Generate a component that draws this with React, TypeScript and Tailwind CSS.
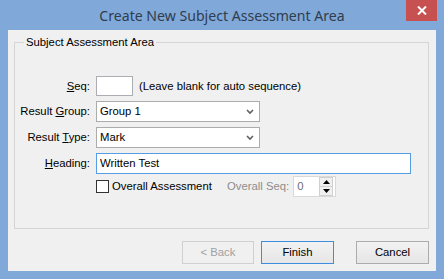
import type { ReactElement, ReactNode } from "react";

const UI_FONT = { fontFamily: '"Liberation Sans", Arial, sans-serif' };
const TITLE_FONT = { fontFamily: '"Noto Sans", "Open Sans", sans-serif' };

function Chevron(): ReactElement {
  return (
    <svg width="8" height="6" viewBox="0 0 8 6" className="shrink-0">
      <path d="M1 1 L4 4 L7 1" fill="none" stroke="#606060" strokeWidth="1.6" />
    </svg>
  );
}

function Label({ children }: { children: ReactNode }): ReactElement {
  return <div className="w-[81px] shrink-0 whitespace-nowrap pr-[6px] text-right text-black">{children}</div>;
}

function Combo({ value }: { value: string }): ReactElement {
  return (
    <div className="flex h-[21px] w-[164px] items-center justify-between border border-[#acacac] bg-white pl-[3px] pr-[5px]">
      <span>{value}</span>
      <Chevron />
    </div>
  );
}

export default function App(): ReactElement {
  return (
    <div className="flex h-[279px] w-[444px] flex-col bg-[#80a8d8] text-[11.3px] text-black" style={UI_FONT}>
      {/* Title bar */}
      <div className="relative flex h-[30px] shrink-0 items-center justify-center">
        <span className="pt-[1px] text-[14.1px] text-[#2f3d4f]" style={TITLE_FONT}>
          Create New Subject Assessment Area
        </span>
        <button className="absolute right-[7px] top-0 flex h-[21px] w-[31px] items-center justify-center bg-[#c75050]">
          <svg width="10" height="9" viewBox="0 0 10 9">
            <path d="M1 0.5 L9 8.5 M9 0.5 L1 8.5" stroke="white" strokeWidth="2" />
          </svg>
        </button>
      </div>

      {/* Client area */}
      <div className="mx-[8px] flex h-[241px] flex-col bg-[#f0f0f0]">
        {/* Group box */}
        <div className="relative ml-[6px] mt-[12px] h-[187px] w-[415px] border border-[#d5d5d5] pt-[33px]">
          <span className="absolute left-[9px] top-[-8px] bg-[#f0f0f0] px-[2px] leading-[14px]">
            Subject Assessment Area
          </span>

          <div className="flex flex-col">
            {/* Seq */}
            <div className="flex h-[20px] items-center">
              <Label>
                <u>S</u>eq:
              </Label>
              <div className="h-[20px] w-[37px] border border-[#abadb3] bg-white" />
              <span className="ml-[6px]">(Leave blank for auto sequence)</span>
            </div>

            {/* Result Group */}
            <div className="mt-[5px] flex items-center">
              <Label>
                Result <u>G</u>roup:
              </Label>
              <Combo value="Group 1" />
            </div>

            {/* Result Type */}
            <div className="mt-[5px] flex items-center">
              <Label>
                Result <u>T</u>ype:
              </Label>
              <Combo value="Mark" />
            </div>

            {/* Heading */}
            <div className="mt-[5px] flex items-center">
              <Label>
                <u>H</u>eading:
              </Label>
              <div className="flex h-[21px] w-[315px] items-center border border-[#569de5] bg-white pl-[3px]">
                Written Test
              </div>
            </div>

            {/* Overall */}
            <div className="mt-[2px] flex h-[21px] items-center">
              <div className="w-[81px] shrink-0" />
              <div className="h-[13px] w-[13px] border border-[#333333] bg-white" />
              <span className="ml-[3px] w-[115px] whitespace-nowrap">Overall Assessment</span>
              <span className="whitespace-nowrap text-[#8d8d8d]">Overall Seq:</span>
              <div className="ml-[4px] flex h-[21px] w-[43px] items-center border border-[#d9d9d9] bg-white">
                <span className="flex-1 pl-[3px] text-[#6d6d6d]">0</span>
                <div className="mr-[2px] flex h-[19px] w-[14px] flex-col border border-[#d0d0d0]">
                  <div className="flex flex-1 items-center justify-center border-b border-[#d0d0d0] bg-[#f0f0f0]">
                    <svg width="7" height="4" viewBox="0 0 7 4">
                      <path d="M0 4 L3.5 0 L7 4 Z" fill="#000" />
                    </svg>
                  </div>
                  <div className="flex flex-1 items-center justify-center bg-[#f0f0f0]">
                    <svg width="7" height="4" viewBox="0 0 7 4">
                      <path d="M0 0 L3.5 4 L7 0 Z" fill="#000" />
                    </svg>
                  </div>
                </div>
              </div>
            </div>
          </div>
        </div>

        {/* Buttons */}
        <div className="mt-[12px] flex h-[23px] pl-[174px]">
          <button className="h-[23px] w-[72px] border border-[#d0d0d0] bg-[#f0f0f0] text-[#a0a0a0]">&lt; Back</button>
          <button className="ml-[7px] h-[23px] w-[73px] border border-[#3c8fdc] bg-gradient-to-b from-[#f2f2f2] to-[#e6e6e6]">
            Finish
          </button>
          <button className="ml-[22px] h-[23px] w-[73px] border border-[#acacac] bg-gradient-to-b from-[#f2f2f2] to-[#e6e6e6]">
            Cancel
          </button>
        </div>
      </div>
    </div>
  );
}
